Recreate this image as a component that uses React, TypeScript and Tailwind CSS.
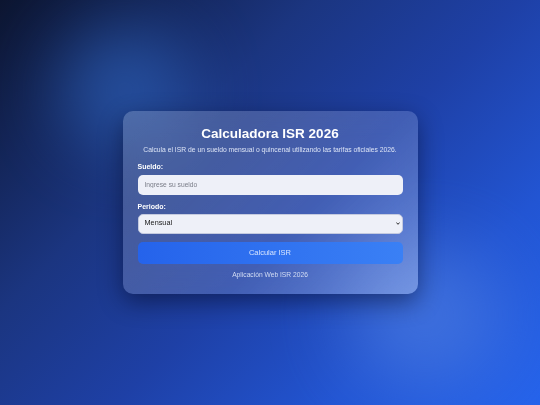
import React from "react";

export default function App() {
  return (
    <div
      className="relative w-[540px] h-[405px] overflow-hidden flex items-center justify-center"
      style={{ fontFamily: '"Liberation Sans", Arial, sans-serif' }}
    >
      <div className="absolute inset-0 bg-[linear-gradient(135deg,#0c1530_0%,#1b3580_33%,#1e40a6_55%,#2255d3_78%,#2563eb_100%)]" />
      <div className="absolute left-[60px] top-[30px] w-[130px] h-[120px] rounded-full bg-[#3068c4] opacity-60 blur-[35px]" />
      <div className="absolute left-[350px] top-[250px] w-[150px] h-[130px] rounded-full bg-[#5a88e4] opacity-55 blur-[40px]" />
      <div className="relative w-[295px] rounded-[10px] bg-[linear-gradient(135deg,rgba(255,255,255,0.2)_0%,rgba(255,255,255,0.16)_60%,rgba(255,255,255,0.3)_100%)] backdrop-blur-md shadow-[0_8px_24px_rgba(0,0,20,0.45)] px-[15px] pt-[15px] pb-[15px] text-white">
        <h1 className="text-center font-bold text-[13.5px] leading-[16px]">Calculadora ISR 2026</h1>
        <p className="mt-[4px] text-center text-[6.75px] leading-[8px] text-[#dbe3f5]">
          Calcula el ISR de un sueldo mensual o quincenal utilizando las tarifas oficiales 2026.
        </p>
        <label className="block mt-[9px] text-[7px] leading-[8px] font-bold">Sueldo:</label>
        <input
          type="text"
          placeholder="Ingrese su sueldo"
          className="mt-[4px] block w-full h-[19.5px] rounded-[5px] bg-[#eef0f8] px-[7px] text-[6.7px] text-[#222] placeholder:text-[#7a7d88] outline-none"
        />
        <label className="block mt-[8px] text-[7px] leading-[8px] font-bold">Periodo:</label>
        <div className="relative mt-[3px]">
          <select className="appearance-none block w-full h-[20px] rounded-[5px] bg-[#eef0f8] border border-[#c4cadf] pl-[6px] pr-[10px] text-[7.3px] text-[#1a1a1a] outline-none">
            <option>Mensual</option>
            <option>Quincenal</option>
          </select>
          <svg className="absolute right-[3px] top-[8.5px] w-[4px] h-[3px] pointer-events-none" viewBox="0 0 4 3">
            <path d="M0.4 0.5 L2 2.3 L3.6 0.5" fill="none" stroke="#1a1a1a" strokeWidth="0.9" />
          </svg>
        </div>
        <button className="mt-[8.5px] block w-full h-[21.5px] rounded-[5px] bg-[linear-gradient(90deg,#2563eb,#3a80f5)] text-[7.5px] text-[#d6e4ff]">
          Calcular ISR
        </button>
        <p className="mt-[7.5px] text-center text-[6.7px] leading-[8px] text-[#d3ddf4]">Aplicación Web ISR 2026</p>
      </div>
    </div>
  );
}
